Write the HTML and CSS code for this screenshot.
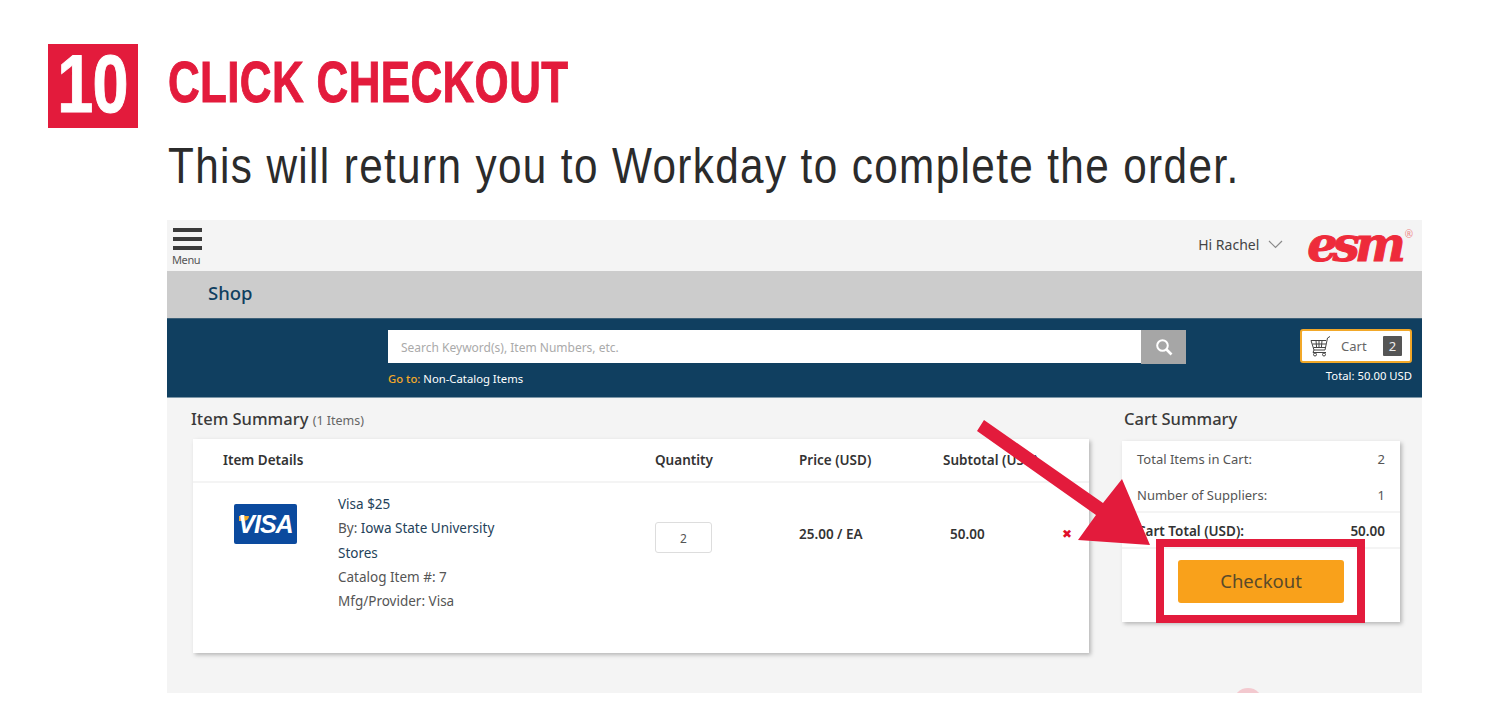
FILE: index.html
```html
<!DOCTYPE html>
<html>
<head>
    <title>Click Checkout</title>
    <link rel="stylesheet" href="styles.css">
</head>
<body>
    <div class="step">
        <div class="step-num"><span class="step-digits">10</span></div>
        <div class="step-text">
            <h1 class="step-title">CLICK CHECKOUT</h1>
            <p class="step-desc">This will return you to Workday to complete the order.</p>
        </div>
    </div>

    <div class="shot">
        <div class="topbar">
            <div class="menu">
                <span class="menu-bar"></span>
                <span class="menu-bar"></span>
                <span class="menu-bar"></span>
                <span class="menu-label">Menu</span>
            </div>
            <div class="user">
                <span class="hi">Hi Rachel</span>
                <svg class="chevron" width="15" height="9" viewBox="0 0 15 9"><path d="M1 1l6.500 6.500L14 1" fill="none" stroke="#8a8a8a" stroke-width="1.200"/></svg>
                <span class="logo">esm</span>
                <span class="reg">®</span>
            </div>
        </div>

        <div class="shopbar">Shop</div>

        <div class="searchbar">
            <div class="search-col">
                <div class="search">
                    <div class="search-input">Search Keyword(s), Item Numbers, etc.</div>
                    <div class="search-btn">
                        <svg width="18" height="18" viewBox="0 0 18 18"><circle cx="7.500" cy="7.500" r="5.300" fill="none" stroke="#fff" stroke-width="2"/><path d="M11.500 11.500l5 5" stroke="#fff" stroke-width="2.600"/></svg>
                    </div>
                </div>
                <div class="goto"><span class="goto-label">Go to:</span> Non-Catalog Items</div>
            </div>
            <div class="cart-col">
                <div class="cart">
                    <svg width="22" height="22" viewBox="0 0 22 22"><path d="M21 1.500l-2.500 1.500-2.500 12H5L2 5.500h15M3.500 9h13.500M4.500 12.500h12M7 5.500l.6 7M10 5.500v7M13 5.500l-.6 7M5 15l-1 2.500h13" fill="none" stroke="#444" stroke-width="1"/><circle cx="6" cy="19.500" r="1.500" fill="none" stroke="#444"/><circle cx="15" cy="19.500" r="1.500" fill="none" stroke="#444"/></svg>
                    <span class="cart-label">Cart</span>
                    <span class="cart-count">2</span>
                </div>
                <div class="cart-total">Total: 50.00 USD</div>
            </div>
        </div>

        <div class="main">
            <div class="items">
                <div class="heading">Item Summary <span class="heading-count">(1 Items)</span></div>
                <div class="card item-card">
                    <div class="row row-head">
                        <div class="col-details">Item Details</div>
                        <div>Quantity</div>
                        <div>Price (USD)</div>
                        <div>Subtotal (USD)</div>
                    </div>
                    <div class="row row-item">
                        <div class="col-details item-info">
                            <div class="visa"><span class="visa-text">VISA</span></div>
                            <div class="item-lines">
                                <div class="dark">Visa $25</div>
                                <div>By: <span class="dark">Iowa State University</span></div>
                                <div class="dark">Stores</div>
                                <div>Catalog Item #: 7</div>
                                <div>Mfg/Provider: Visa</div>
                            </div>
                        </div>
                        <div><div class="qty">2</div></div>
                        <div class="cell-bold">25.00 / EA</div>
                        <div class="cell-sub">
                            <span class="cell-bold">50.00</span>
                            <span class="remove">✖</span>
                        </div>
                    </div>
                </div>
            </div>

            <div class="summary">
                <div class="heading">Cart Summary</div>
                <div class="card summary-card">
                    <div class="sum-row"><span>Total Items in Cart:</span><span>2</span></div>
                    <div class="sum-row sum-row-line"><span>Number of Suppliers:</span><span>1</span></div>
                    <div class="sum-row sum-row-total"><span>Cart Total (USD):</span><span>50.00</span></div>
                    <div class="checkout-wrap"><div class="checkout">Checkout</div></div>
                </div>
            </div>
        </div>

        <!-- callouts drawn on top of the screenshot -->
        <svg class="arrow" width="190" height="140" viewBox="0 0 190 140"><polygon points="17,10 136,93 155,69 183,135 111,130 129,105 10,21" fill="#e31b3c"/></svg>
        <div class="highlight"></div>
        <div class="blob"></div>
    </div>
</body>
</html>
```

FILE: styles.css
```css
* {
    box-sizing: border-box;
}
body {
    margin: 0;
    background: #fff;
    font-family: "Noto Sans", sans-serif;
    overflow: hidden;
}
.step {
    display: flex;
    height: 220px;
    padding: 44px 0 0 48px;
    font-family: "Liberation Sans", sans-serif;
}
.step-num {
    width: 90px;
    height: 84px;
    background: #e31b3c;
    color: #fff;
    font-size: 82px;
    font-weight: bold;
    line-height: 80px;
    text-align: center;
}
.step-digits {
    display: inline-block;
    transform: scaleX(0.79);
    letter-spacing: -1px;
    -webkit-text-stroke: 1px #fff;
}
.step-text {
    margin-left: 30px;
}
.step-title {
    margin: 6px 0 0;
    color: #e31b3c;
    font-size: 58px;
    font-weight: bold;
    line-height: 64px;
    letter-spacing: 0.5px;
    white-space: nowrap;
    transform: scaleX(0.757);
    transform-origin: left;
    -webkit-text-stroke: 1px #e31b3c;
}
.step-desc {
    margin: 22px 0 0;
    color: #2b2b2b;
    font-size: 50px;
    line-height: 60px;
    letter-spacing: 1.6px;
    white-space: nowrap;
    transform: scaleX(0.846);
    transform-origin: left;
}
.shot {
    position: relative;
    width: 1255px;
    height: 473px;
    margin-left: 167px;
    background: #f4f4f4;
    overflow: hidden;
}
.topbar {
    display: flex;
    justify-content: space-between;
    height: 51px;
    padding: 8px 9px 0 6px;
}
.menu {
    width: 29px;
}
.menu-bar {
    display: block;
    height: 4px;
    margin-bottom: 5px;
    background: #3a3a3a;
}
.menu-label {
    display: block;
    margin-top: -2px;
    margin-left: -1px;
    color: #555;
    font-size: 11px;
    line-height: 14px;
    letter-spacing: -0.4px;
}
.user {
    display: flex;
    align-items: center;
    height: 32px;
}
.hi {
    color: #444;
    font-size: 14px;
}
.chevron {
    margin: 0 24px 0 9px;
}
.logo {
    padding-right: 5px;
    color: #ee2b3b;
    font-family: "DejaVu Serif", serif;
    font-size: 48px;
    font-weight: bold;
    font-style: italic;
    line-height: 60px;
    letter-spacing: -5px;
    -webkit-text-stroke: 1px #ee2b3b;
}
.reg {
    align-self: flex-start;
    margin: -1px 0 0 -1px;
    color: #e88;
    font-size: 10px;
    line-height: 14px;
}
.shopbar {
    height: 47px;
    padding-left: 41px;
    background: #ccc;
    color: #103f60;
    font-size: 18.500px;
    font-weight: 500;
    line-height: 44px;
}
.searchbar {
    display: flex;
    justify-content: space-between;
    height: 80px;
    padding: 11px 10px 0 221px;
    background: #103f60;
    border-top: 1px solid #3d6078;
    border-bottom: 1px solid #7d97a8;
}
.search-col {
    width: 798px;
}
.search {
    display: flex;
    height: 34px;
}
.search-input {
    flex: 1;
    height: 33px;
    padding-left: 13px;
    background: #fff;
    color: #aaa;
    font-size: 12px;
    line-height: 35px;
}
.search-btn {
    display: flex;
    align-items: center;
    justify-content: center;
    width: 45px;
    background: #a6a6a6;
}
.goto {
    margin-top: 7px;
    color: #fff;
    font-size: 11.300px;
    line-height: 16px;
}
.goto-label {
    color: #f2a829;
    font-weight: 500;
}
.cart-col {
    width: 112px;
    margin-top: -1px;
}
.cart {
    display: flex;
    align-items: center;
    height: 34px;
    padding: 0 8px 0 7px;
    background: #fff;
    border: 2px solid #f2a829;
    border-radius: 3px;
}
.cart-label {
    flex: 1;
    margin-left: 10px;
    color: #666;
    font-size: 13px;
}
.cart-count {
    width: 19px;
    height: 20px;
    background: #555;
    border-radius: 1px;
    color: #eee;
    font-size: 13px;
    line-height: 20px;
    text-align: center;
}
.cart-total {
    margin-top: 5px;
    color: #fff;
    font-size: 11.300px;
    line-height: 16px;
    text-align: right;
    white-space: nowrap;
}
.main {
    display: flex;
    gap: 33px;
    padding-left: 26px;
}
.items {
    width: 896px;
}
.summary {
    width: 278px;
}
.heading {
    height: 41px;
    margin-left: -2px;
    color: #3a3a3a;
    font-size: 16.500px;
    font-weight: 500;
    line-height: 41px;
}
.summary .heading {
    height: 43px;
    margin-left: 2px;
}
.heading-count {
    color: #666;
    font-size: 12.500px;
    font-weight: normal;
}
.card {
    background: #fff;
    box-shadow: 2px 2px 4px rgba(0, 0, 0, 0.25);
}
.item-card {
    height: 214px;
}
.row {
    display: grid;
    grid-template-columns: 432px 144px 144px 1fr;
    padding-left: 30px;
}
.row-head {
    height: 44px;
    border-bottom: 2px solid #f4f4f4;
    color: #333;
    font-size: 13.500px;
    font-weight: 600;
    line-height: 42px;
    white-space: nowrap;
}
.row-item {
    padding-top: 9px;
}
.item-info {
    display: flex;
}
.visa {
    position: relative;
    width: 63px;
    height: 40px;
    margin: 12px 0 0 11px;
    background: #0b4a9e;
    border-radius: 2px;
    text-align: center;
}
.visa:before {
    content: "";
    position: absolute;
    left: 5px;
    top: 12px;
    width: 10px;
    height: 5px;
    background: #f2a829;
    border-radius: 0 0 8px 0;
}
.visa-text {
    position: relative;
    color: #fff;
    font-family: "Liberation Sans", sans-serif;
    font-size: 25px;
    font-style: italic;
    font-weight: bold;
    line-height: 41px;
    letter-spacing: -1px;
}
.item-lines {
    width: 170px;
    margin-left: 41px;
    color: #555;
    font-size: 13.500px;
    line-height: 24.300px;
    white-space: nowrap;
}
.dark {
    color: #24425a;
}
.qty {
    width: 57px;
    height: 31px;
    margin-top: 30px;
    border: 1px solid #ddd;
    border-radius: 3px;
    color: #555;
    font-size: 12px;
    line-height: 31px;
    text-align: center;
}
.cell-bold {
    color: #333;
    font-size: 13.500px;
    font-weight: 600;
    line-height: 84px;
}
.cell-sub {
    display: flex;
    padding-left: 7px;
}
.remove {
    margin-left: 77px;
    color: #e0102a;
    font-size: 12px;
    line-height: 84px;
}
.summary-card {
    height: 181px;
    color: #555;
    font-size: 13px;
}
.sum-row {
    display: flex;
    justify-content: space-between;
    height: 36px;
    padding: 0 15px;
    line-height: 36px;
}
.sum-row-line {
    height: 36px;
    border-bottom: 2px solid #f4f4f4;
}
.sum-row-total {
    height: 36px;
    border-bottom: 2px solid #f4f4f4;
    color: #333;
    font-size: 13.500px;
    font-weight: 600;
}
.checkout-wrap {
    padding: 11px 56px 0;
}
.checkout {
    height: 43px;
    background: #f9a11b;
    border-radius: 3px;
    color: #5a4a2a;
    font-size: 18.500px;
    line-height: 42px;
    text-align: center;
}
.arrow {
    position: absolute;
    left: 800px;
    top: 190px;
}
.highlight {
    position: absolute;
    left: 989px;
    top: 319px;
    width: 209px;
    height: 84px;
    border: 8px solid #e31b3c;
}
.blob {
    position: absolute;
    left: 1066px;
    top: 468px;
    width: 30px;
    height: 30px;
    background: #f3c9cf;
    border-radius: 50%;
}
```
